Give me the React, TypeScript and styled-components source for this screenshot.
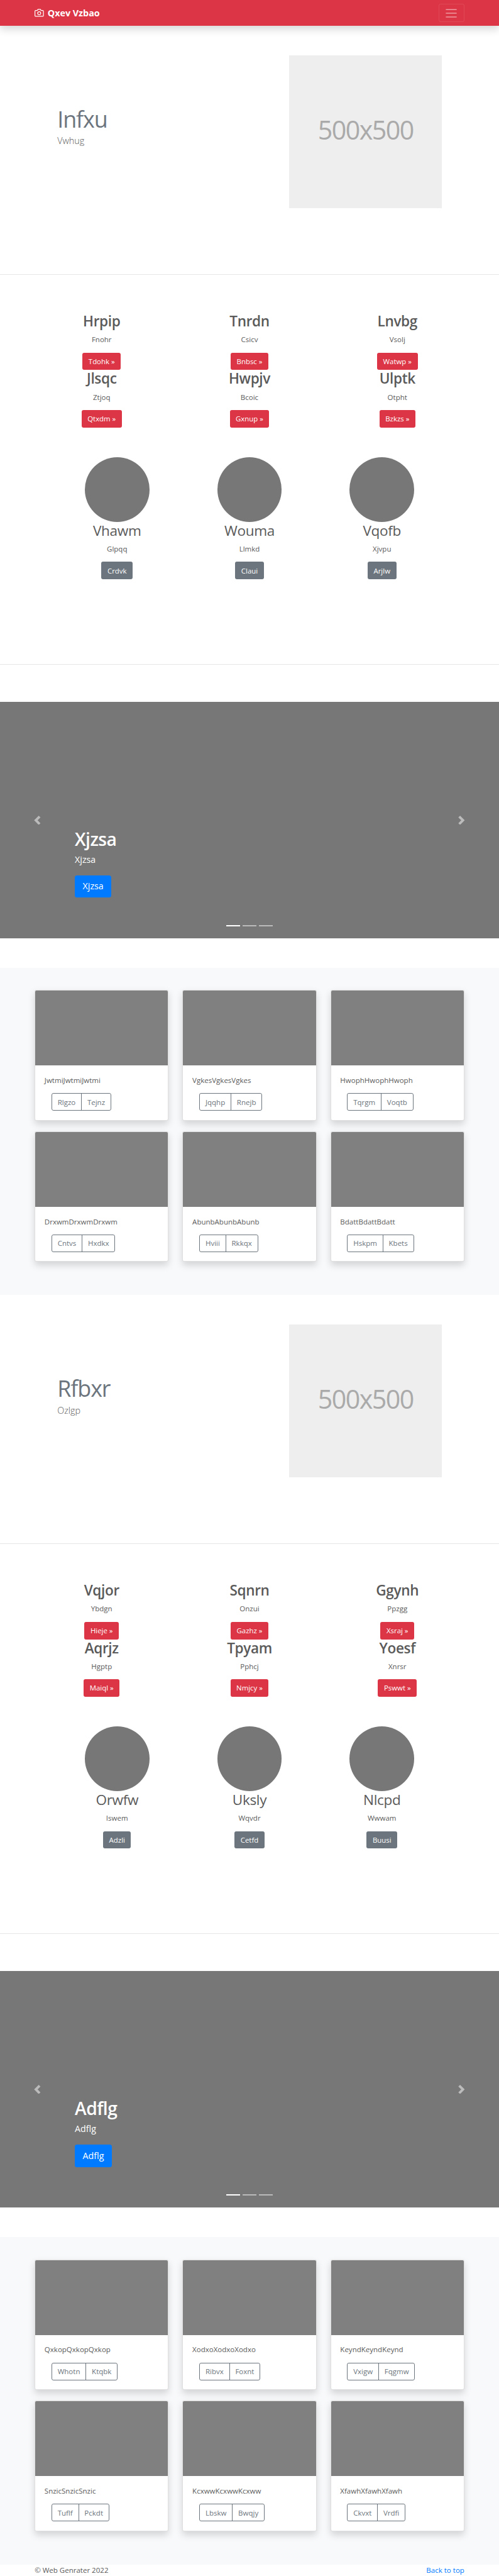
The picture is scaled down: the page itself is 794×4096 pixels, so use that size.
import React from 'react';
import styled, { createGlobalStyle } from 'styled-components';

/* 1rem equals 16 design pixels of a 1080px wide layout. */
const GlobalStyle = createGlobalStyle`
  html { font-size: 11.765px; }
  *, *::before, *::after { box-sizing: border-box; }
  body {
    margin: 0;
    background: #fff;
    color: #5a5a5a;
    font-family: 'Open Sans', 'Noto Sans', sans-serif;
    font-size: 0.98rem;
    line-height: 1.5rem;
  }
  h1, h2, p { margin: 0; }
  a { color: inherit; text-decoration: none; }
`;

const Header = styled.header`
  display: flex;
  align-items: center;
  justify-content: space-between;
  height: 3.5rem;
  padding: 0 4.6875rem;
  background: #dc3545;
  box-shadow: 0 0.5rem 1rem rgba(0, 0, 0, 0.15);
`;

const Brand = styled.a`
  display: flex;
  align-items: center;
  gap: 0.5rem;
  color: #fff;
  font-size: 1.22rem;
  font-weight: 700;
  white-space: nowrap;

  svg { width: 1.25rem; height: 1.25rem; }
`;

const Toggler = styled.button`
  display: flex;
  align-items: center;
  justify-content: center;
  width: 3.5rem;
  height: 2.5rem;
  padding: 0;
  background: transparent;
  border: 1px solid rgba(255, 255, 255, 0.1);
  border-radius: 0.25rem;

  svg { width: 1.875rem; height: 1.875rem; }
`;

const Hero = styled.section`
  display: flex;
  justify-content: space-between;
  height: 33.56rem;
  padding: 4rem 7.75rem 0;
`;

const HeroText = styled.div`
  padding-top: 6.79rem;
`;

const HeroTitle = styled.h2`
  color: #6c757d;
  font-size: 3.05rem;
  font-weight: 400;
  line-height: 3.75rem;
  letter-spacing: -0.09rem;
`;

const HeroLead = styled.p`
  margin-top: 0.19rem;
  font-size: 1.22rem;
  font-weight: 300;
  line-height: 1.75rem;
`;

const Placeholder = styled.div`
  display: flex;
  align-items: center;
  justify-content: center;
  width: 20.6rem;
  height: 20.6rem;
  padding-bottom: 0.5rem;
  background: #eee;
  color: #aaa;
  font-size: 3.5rem;
  letter-spacing: -0.13rem;
`;

const Divider = styled.hr`
  height: 1px;
  margin: 0;
  border: 0;
  background: #e6e6e6;
`;

const Marketing = styled.section`
  height: 52.6rem;
  padding-top: 5.1rem;
`;

const Columns = styled.div<{ $inset: string }>`
  display: grid;
  grid-template-columns: repeat(3, 1fr);
  padding: 0 ${(p) => p.$inset};

  & + & { margin-top: 4rem; }
`;

const Feature = styled.div`
  display: flex;
  flex-direction: column;
  align-items: center;
`;

const FeatureTitle = styled.h2<{ $weight: number }>`
  margin-bottom: 0.5rem;
  font-size: 1.92rem;
  font-weight: ${(p) => p.$weight};
  line-height: 2.4rem;
  letter-spacing: -0.016em;
`;

const FeatureText = styled.p`
  margin-bottom: 1rem;
`;

const Circle = styled.div`
  width: 8.75rem;
  height: 8.75rem;
  border-radius: 50%;
  background: #777;
`;

const Button = styled.a<{ $color: string; $large?: boolean }>`
  display: inline-flex;
  align-items: center;
  height: ${(p) => (p.$large ? '3rem' : '2.375rem')};
  padding: 0 ${(p) => (p.$large ? '1.0625rem' : '0.8125rem')};
  border-radius: ${(p) => (p.$large ? '0.3rem' : '0.25rem')};
  background: ${(p) => p.$color};
  color: #fff;
  font-size: ${(p) => (p.$large ? '1.21rem' : '0.97rem')};
  white-space: nowrap;
`;

const Carousel = styled.section`
  position: relative;
  display: flex;
  align-items: center;
  height: 32rem;
  margin: 5rem 0 4rem;
  background: #777;
`;

const Control = styled.button`
  display: flex;
  align-items: center;
  justify-content: center;
  flex: 0 0 15%;
  padding: 0;
  border: 0;
  background: none;
  opacity: 0.5;

  svg { width: 1.25rem; height: 1.25rem; }
`;

const Caption = styled.div`
  flex: 1;
  align-self: flex-end;
  padding-bottom: 5.5rem;
  color: #fff;
  font-size: 1.21rem;
  line-height: 1.75rem;

  h1 {
    margin-bottom: 0.42rem;
    font-size: 2.4rem;
    font-weight: 600;
    line-height: 3rem;
    letter-spacing: -0.02em;
  }

  p { margin-bottom: 1.25rem; }
`;

const Indicators = styled.div`
  position: absolute;
  right: 0;
  bottom: 1.625rem;
  left: 0;
  display: flex;
  justify-content: center;
  gap: 0.375rem;
`;

const Indicator = styled.span<{ $active: boolean }>`
  width: 1.875rem;
  height: 0.1875rem;
  background: #fff;
  opacity: ${(p) => (p.$active ? 1 : 0.5)};
`;

const Album = styled.section`
  display: grid;
  grid-template-columns: repeat(3, 1fr);
  gap: 1.5rem 1.875rem;
  padding: 3rem 4.6875rem 4.5rem;
  background: #f8f9fa;
`;

const Card = styled.article`
  height: 17.61rem;
  overflow: hidden;
  background: #fff;
  border: 1px solid rgba(0, 0, 0, 0.125);
  border-radius: 0.25rem;
  box-shadow: 0 0.5rem 1rem rgba(0, 0, 0, 0.15);
`;

const CardImage = styled.div`
  height: 10.11rem;
  background: #808080;
`;

const CardBody = styled.div`
  padding: 1.25rem;

  p { margin-bottom: 1rem; }
`;

const ButtonGroup = styled.div`
  display: flex;
  width: max-content;
  height: 2.375rem;
  margin-left: 0.9375rem;
  border: 1px solid #6c757d;
  border-radius: 0.25rem;
  color: #6c757d;
`;

const GroupButton = styled.a`
  display: flex;
  align-items: center;
  padding: 0 0.75rem;

  & + & { border-left: 1px solid #6c757d; }
`;

const Footer = styled.footer`
  display: flex;
  justify-content: space-between;
  height: 1.5rem;
  padding: 0 4.6875rem;

  a { color: #007bff; }
`;

type Triple = [string, string, string];

interface BlockData {
  hero: [string, string];
  features: Triple[];
  people: Triple[];
  slide: string;
  cards: Triple[];
}

const blocks: BlockData[] = [
  {
    hero: ['Infxu', 'Vwhug'],
    features: [
      ['Hrpip', 'Fnohr', 'Tdohk'],
      ['Tnrdn', 'Csicv', 'Bnbsc'],
      ['Lnvbg', 'Vsolj', 'Watwp'],
      ['Jlsqc', 'Ztjoq', 'Qtxdm'],
      ['Hwpjv', 'Bcoic', 'Gxnup'],
      ['Ulptk', 'Otpht', 'Bzkzs'],
    ],
    people: [
      ['Vhawm', 'Glpqq', 'Crdvk'],
      ['Wouma', 'Llmkd', 'Claui'],
      ['Vqofb', 'Xjvpu', 'Arjlw'],
    ],
    slide: 'Xjzsa',
    cards: [
      ['Jwtmi', 'Rlgzo', 'Tejnz'],
      ['Vgkes', 'Jqqhp', 'Rnejb'],
      ['Hwoph', 'Tqrgm', 'Voqtb'],
      ['Drxwm', 'Cntvs', 'Hxdkx'],
      ['Abunb', 'Hviii', 'Rkkqx'],
      ['Bdatt', 'Hskpm', 'Kbets'],
    ],
  },
  {
    hero: ['Rfbxr', 'Ozlgp'],
    features: [
      ['Vqjor', 'Ybdgn', 'Hieje'],
      ['Sqnrn', 'Onzui', 'Gazhz'],
      ['Ggynh', 'Ppzgg', 'Xsraj'],
      ['Aqrjz', 'Hgptp', 'Maiql'],
      ['Tpyam', 'Pphcj', 'Nmjcy'],
      ['Yoesf', 'Xnrsr', 'Pswwt'],
    ],
    people: [
      ['Orwfw', 'Iswem', 'Adzli'],
      ['Uksly', 'Wqvdr', 'Cetfd'],
      ['Nlcpd', 'Wwwam', 'Buusi'],
    ],
    slide: 'Adflg',
    cards: [
      ['Qxkop', 'Whotn', 'Ktqbk'],
      ['Xodxo', 'Ribvx', 'Foxnt'],
      ['Keynd', 'Vxigw', 'Fqgmw'],
      ['Snzic', 'Tuflf', 'Pckdt'],
      ['Kcxww', 'Lbskw', 'Bwqjy'],
      ['Xfawh', 'Ckvxt', 'Vrdfi'],
    ],
  },
];

const Camera = () => (
  <svg viewBox="0 0 24 24" fill="none" stroke="#fff" strokeWidth="2" strokeLinecap="round" strokeLinejoin="round">
    <path d="M23 19a2 2 0 0 1-2 2H3a2 2 0 0 1-2-2V8a2 2 0 0 1 2-2h4l2-3h6l2 3h4a2 2 0 0 1 2 2z" />
    <circle cx="12" cy="13" r="4" />
  </svg>
);

const Bars = () => (
  <svg viewBox="0 0 30 30" fill="none" stroke="rgba(255,255,255,0.5)" strokeWidth="2" strokeLinecap="round">
    <path d="M4 7h22M4 15h22M4 23h22" />
  </svg>
);

const Chevron = ({ d }: { d: string }) => (
  <svg viewBox="0 0 8 8" fill="#fff">
    <path d={d} />
  </svg>
);

const Block = ({ hero, features, people, slide, cards }: BlockData) => (
  <>
    <Hero>
      <HeroText>
        <HeroTitle>{hero[0]}</HeroTitle>
        <HeroLead>{hero[1]}</HeroLead>
      </HeroText>
      <Placeholder>500x500</Placeholder>
    </Hero>
    <Divider />
    <Marketing>
      <Columns $inset="3.75rem">
        {features.map(([title, text, action]) => (
          <Feature key={title}>
            <FeatureTitle $weight={600}>{title}</FeatureTitle>
            <FeatureText>{text}</FeatureText>
            <Button href="#" $color="#dc3545">{action} »</Button>
          </Feature>
        ))}
      </Columns>
      <Columns $inset="6.875rem">
        {people.map(([title, text, action]) => (
          <Feature key={title}>
            <Circle />
            <FeatureTitle $weight={400}>{title}</FeatureTitle>
            <FeatureText>{text}</FeatureText>
            <Button href="#" $color="#6c757d">{action}</Button>
          </Feature>
        ))}
      </Columns>
    </Marketing>
    <Divider />
    <Carousel>
      <Control aria-label="Previous">
        <Chevron d="M5.25 0l-4 4 4 4 1.5-1.5L4.25 4l2.5-2.5L5.25 0z" />
      </Control>
      <Caption>
        <h1>{slide}</h1>
        <p>{slide}</p>
        <Button href="#" $color="#007bff" $large>{slide}</Button>
      </Caption>
      <Control aria-label="Next">
        <Chevron d="M2.75 0l-1.5 1.5L3.75 4l-2.5 2.5L2.75 8l4-4-4-4z" />
      </Control>
      <Indicators>
        {[0, 1, 2].map((i) => (
          <Indicator key={i} $active={i === 0} />
        ))}
      </Indicators>
    </Carousel>
    <Album>
      {cards.map(([title, left, right]) => (
        <Card key={title}>
          <CardImage />
          <CardBody>
            <p>{title.repeat(3)}</p>
            <ButtonGroup>
              <GroupButton href="#">{left}</GroupButton>
              <GroupButton href="#">{right}</GroupButton>
            </ButtonGroup>
          </CardBody>
        </Card>
      ))}
    </Album>
  </>
);

export default function App() {
  return (
    <>
      <GlobalStyle />
      <Header>
        <Brand href="#">
          <Camera />
          Qxev Vzbao
        </Brand>
        <Toggler aria-label="Toggle navigation">
          <Bars />
        </Toggler>
      </Header>
      {blocks.map((block) => (
        <Block key={block.slide} {...block} />
      ))}
      <Footer>
        <span>© Web Genrater 2022</span>
        <a href="#">Back to top</a>
      </Footer>
    </>
  );
}
